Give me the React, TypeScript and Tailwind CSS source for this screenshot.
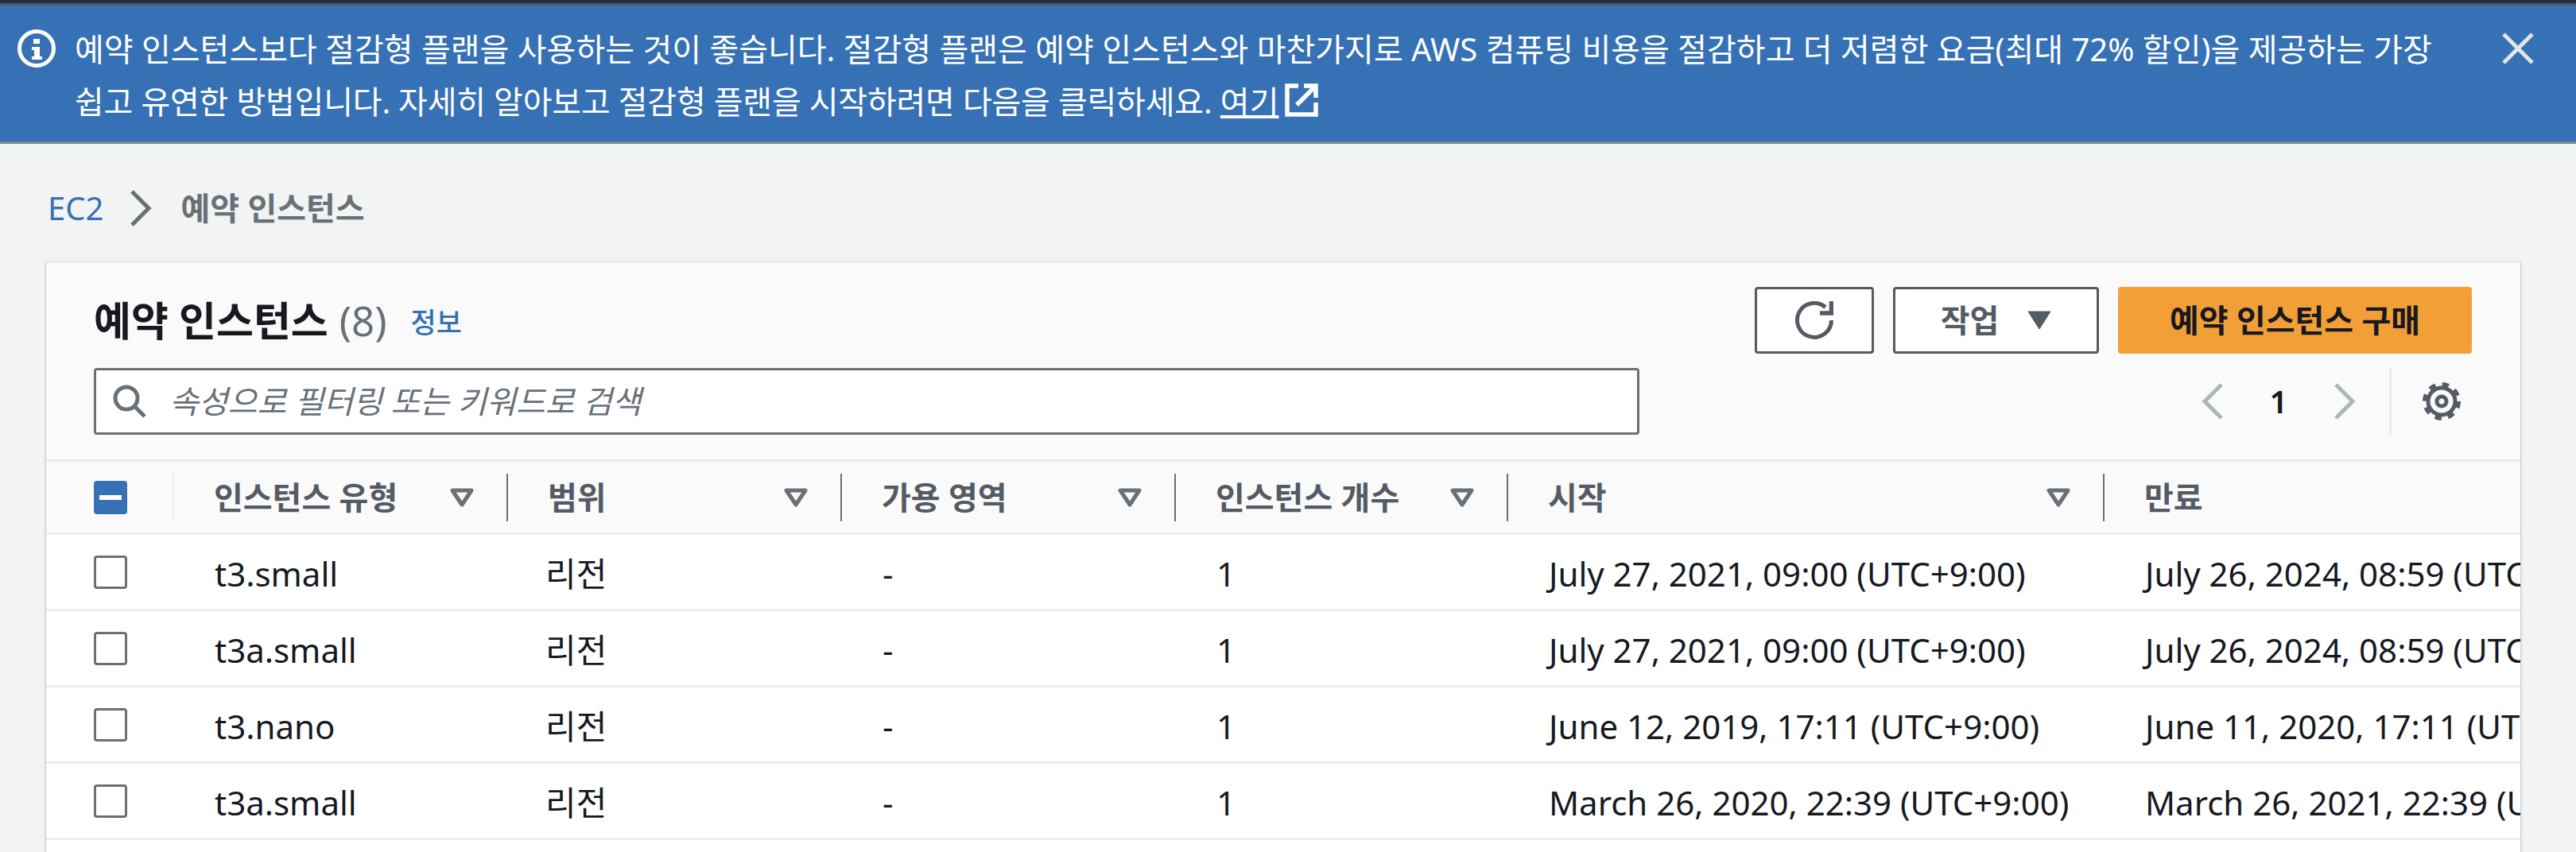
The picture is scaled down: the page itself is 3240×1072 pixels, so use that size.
const columns = [
  { label: '인스턴스 유형', sort: true },
  { label: '범위', sort: true },
  { label: '가용 영역', sort: true },
  { label: '인스턴스 개수', sort: true },
  { label: '시작', sort: true },
  { label: '만료', sort: false },
]

const rows = [
  ['t3.small', '리전', '-', '1', 'July 27, 2021, 09:00 (UTC+9:00)', 'July 26, 2024, 08:59 (UTC+9:00)'],
  ['t3a.small', '리전', '-', '1', 'July 27, 2021, 09:00 (UTC+9:00)', 'July 26, 2024, 08:59 (UTC+9:00)'],
  ['t3.nano', '리전', '-', '1', 'June 12, 2019, 17:11 (UTC+9:00)', 'June 11, 2020, 17:11 (UTC+9:00)'],
  ['t3a.small', '리전', '-', '1', 'March 26, 2020, 22:39 (UTC+9:00)', 'March 26, 2021, 22:39 (UTC+9:00)'],
]

const gridCols = 'grid grid-cols-[161px_420px_420px_420px_418px_750px_800px]'

function SortIcon() {
  return (
    <svg width="30" height="24" viewBox="0 0 30 24" className="shrink-0">
      <path d="M3 3h24L15 21z" fill="none" stroke="#687078" strokeWidth="5" strokeLinejoin="round" />
    </svg>
  )
}

function Chevron({ left, color }: { left?: boolean; color: string }) {
  return (
    <svg width="27" height="46" viewBox="0 0 27 46" className="shrink-0">
      <path d={left ? 'M25 2 4 23l21 21' : 'M2 2l21 21L2 44'} fill="none" stroke={color} strokeWidth="5" />
    </svg>
  )
}

export default function App() {
  return (
    <div className="h-[1072px] overflow-hidden bg-[#f2f3f3] font-['Noto_Sans','Noto_Sans_CJK_KR',sans-serif] text-[42px] text-[#16191f]">
      <div className="h-[4px] bg-[#232f3e]" />
      <div className="h-[3px] bg-[#545b64]" />

      <div className="flex h-[174px] border-b-[3px] border-[#7d8998] bg-[#3671b5] text-white">
        <svg width="48" height="48" viewBox="0 0 48 48" className="ml-[22px] mt-[30px] shrink-0">
          <circle cx="24" cy="24" r="21.5" fill="none" stroke="white" strokeWidth="5" />
          <path d="M20 12h8v6h-8zM18 22h10v12h3v4H18v-4h3v-8h-3z" fill="white" />
        </svg>
        <p className="ml-[24px] mt-[22px] w-[2990px] text-[40px] leading-[66px]">
          예약 인스턴스보다 절감형 플랜을 사용하는 것이 좋습니다. 절감형 플랜은 예약 인스턴스와 마찬가지로 AWS 컴퓨팅 비용을 절감하고 더 저렴한 요금(최대 72% 할인)을 제공하는 가장
          <br />
          <span className="tracking-[-0.2px]">쉽고 유연한 방법입니다. 자세히 알아보고 절감형 플랜을 시작하려면 다음을 클릭하세요.</span>{' '}
          <span className="underline">여기</span>
          <svg width="42" height="42" viewBox="0 0 42 42" className="ml-[8px] inline-block align-[-4px]">
            <path d="M17 3H3v36h36V24M24 3h15v15M37 5 15 27" fill="none" stroke="white" strokeWidth="5.5" />
          </svg>
        </p>
        <svg width="40" height="40" viewBox="0 0 40 40" className="ml-auto mr-[53px] mt-[34px] shrink-0">
          <path d="M2 2l36 36M38 2 2 38" stroke="#e3e5e6" strokeWidth="5" />
        </svg>
      </div>

      <nav className="ml-[60px] mt-[58px] flex h-[46px] items-center text-[40px]">
        <span className="text-[#3671b5]">EC2</span>
        <span className="ml-[34px] mr-[36px]">
          <Chevron color="#687078" />
        </span>
        <span className="font-semibold text-[#687078]">예약 인스턴스</span>
      </nav>

      <div className="ml-[58px] mr-[70px] mt-[43px] border-t-[3px] border-[#eaeded] bg-white shadow-[0_2px_3px_rgba(0,28,36,0.4)]">
        <div className="flex h-[250px] justify-between border-b-[3px] border-[#eaeded] bg-[#fafafa] pl-[60px] pr-[61px]">
          <div className="w-[1944px]">
            <div className="mt-[39px] flex h-[66px] items-center">
              <h1 className="text-[51px] font-bold">예약 인스턴스</h1>
              <span className="ml-[14px] text-[51px] text-[#687078]">(8)</span>
              <span className="ml-[30px] mt-[6px] text-[35px] font-medium text-[#3671b5]">정보</span>
            </div>
            <div className="mt-[27px] flex h-[84px] items-center rounded-[4px] border-[3px] border-[#687078] bg-white pl-[20px]">
              <svg width="44" height="44" viewBox="0 0 44 44">
                <circle cx="18" cy="18" r="14" fill="none" stroke="#687078" strokeWidth="5" />
                <path d="M28 28l13 13" stroke="#687078" strokeWidth="5" />
              </svg>
              <span className="ml-[28px] text-[40px] italic text-[#687078]">속성으로 필터링 또는 키워드로 검색</span>
            </div>
          </div>
          <div className="flex flex-col items-end">
            <div className="mt-[30px] flex gap-[24px] text-[40px]">
              <button className="flex h-[84px] w-[150px] items-center justify-center rounded-[4px] border-[3px] border-[#545b64] bg-white">
                <svg width="48" height="48" viewBox="0 0 48 48">
                  <path d="M45.5 24A21.5 21.5 0 1 1 38 7.5" fill="none" stroke="#545b64" strokeWidth="5" />
                  <path d="M45.5 0v15H31" fill="none" stroke="#545b64" strokeWidth="5.5" />
                </svg>
              </button>
              <button className="flex h-[84px] w-[259px] items-center justify-center gap-[36px] rounded-[4px] border-[3px] border-[#545b64] bg-white font-semibold text-[#545b64]">
                작업
                <svg width="30" height="24" viewBox="0 0 30 24">
                  <path d="M1 1h28L15 23z" fill="#545b64" stroke="#545b64" strokeWidth="1" strokeLinejoin="round" />
                </svg>
              </button>
              <button className="flex h-[84px] w-[445px] items-center justify-center rounded-[4px] bg-[#f29f38] font-semibold">
                예약 인스턴스 구매
              </button>
            </div>
            <div className="mr-[14px] mt-[18px] flex h-[84px] items-center">
              <Chevron left color="#aab7b8" />
              <span className="flex w-[140px] justify-center text-[40px] font-semibold">1</span>
              <Chevron color="#aab7b8" />
              <div className="ml-[42px] h-[84px] w-[3px] bg-[#eaeded]" />
              <svg width="48" height="48" viewBox="0 0 48 48" className="ml-[39px]">
                <circle cx="24" cy="24" r="21" fill="none" stroke="#545b64" strokeWidth="6" strokeDasharray="8.2 8.3" />
                <circle cx="24" cy="24" r="17" fill="none" stroke="#545b64" strokeWidth="5" />
                <circle cx="24" cy="24" r="6" fill="none" stroke="#545b64" strokeWidth="5" />
              </svg>
            </div>
          </div>
        </div>

        <div className={`${gridCols} h-[92px] items-center border-b-[3px] border-[#eaeded] bg-[#fafafa] text-[40px] font-semibold text-[#545b64]`}>
          <div className="flex h-[60px] items-center justify-between border-r-[2px] border-[#eaeded] pl-[60px]">
            <span className="relative h-[42px] w-[42px] rounded-[4px] bg-[#3671b5]">
              <span className="absolute left-[7px] top-[18px] h-[6px] w-[28px] bg-white" />
            </span>
          </div>
          {columns.map((c) => (
            <div key={c.label} className="flex h-[60px] items-center justify-between border-r-[2px] border-[#687078] pl-[50px] pr-[41px] last:border-r-0">
              <span>{c.label}</span>
              {c.sort && <SortIcon />}
            </div>
          ))}
        </div>

        {rows.map((row, i) => (
          <div key={i} className={`${gridCols} h-[96px] items-center overflow-hidden border-b-[3px] border-[#eaeded] bg-white`}>
            <div className="pl-[60px]">
              <div className="h-[42px] w-[42px] rounded-[4px] border-[3px] border-[#687078] bg-white" />
            </div>
            {row.map((cell, j) => (
              <div key={j} className={`whitespace-nowrap pt-[3px] ${j === 1 ? 'pl-[47px]' : 'pl-[51px]'}`}>{cell}</div>
            ))}
          </div>
        ))}

        <div className="h-[60px] bg-white" />
      </div>
    </div>
  )
}
